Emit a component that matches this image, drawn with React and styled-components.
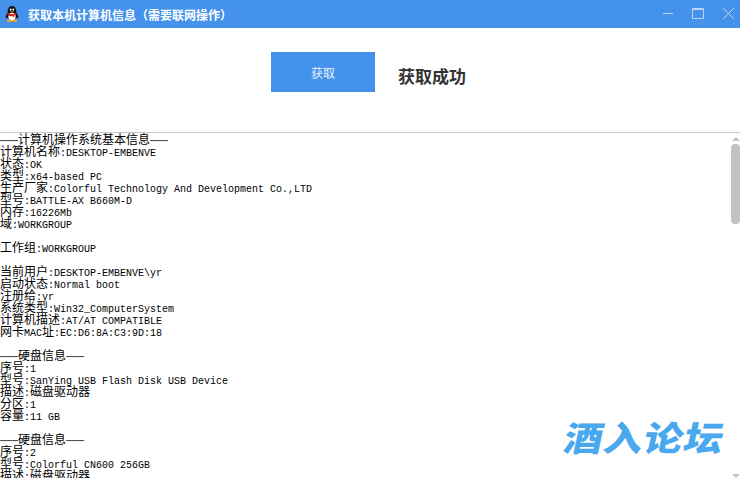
import React from 'react'
import styled, { createGlobalStyle } from 'styled-components'

const Global = createGlobalStyle`
html, body { margin: 0; padding: 0; background: #fff; }
#root { width: 740px; height: 478px; overflow: hidden; }
`
const Window = styled.div`
position: relative;
width: 740px;
height: 478px;
display: flex;
flex-direction: column;
background: #fff;
overflow: hidden;
`
const TitleBar = styled.div`
height: 28px;
flex: none;
background: #4592ec;
display: flex;
align-items: center;
padding-left: 4px;
`
const Title = styled.div`
margin-left: 8px;
color: #fff;
font: 700 12px "Noto Sans CJK SC", sans-serif;
white-space: nowrap;
`
const Controls = styled.div`
margin-left: auto;
display: flex;
align-items: center;
`
const Control = styled.svg`
display: block;
width: 30px;
height: 28px;
fill: none;
stroke: #b9d5f8;
`
const Actions = styled.div`
height: 105px;
flex: none;
display: flex;
align-items: flex-start;
padding: 24px 0 0 271px;
box-sizing: border-box;
border-bottom: 1px solid #c8c8c8;
`
const Button = styled.button`
width: 104px;
height: 40px;
border: 0;
padding: 0;
background: #4592ec;
color: #e8f2fe;
font: 12px "Noto Sans CJK SC", sans-serif;
`
const Status = styled.div`
margin: 15px 0 0 23px;
color: #333;
font: 700 17px/1 "Noto Sans CJK SC", sans-serif;
`
const Body = styled.div`
flex: 1;
min-height: 0;
display: flex;
`
const Log = styled.div`
flex: 1;
overflow: hidden;
color: #000;
font: 10px/12px "Liberation Mono", monospace;
`
const Line = styled.div`
height: 12px;
white-space: pre;
`
const Han = styled.span`
font: 12px/12px "Noto Sans CJK SC", sans-serif;
`
const Track = styled.div`
width: 9px;
flex: none;
display: flex;
flex-direction: column;
align-items: center;
`
const Arrow = styled.div`
width: 0;
height: 0;
border-left: 4px solid transparent;
border-right: 4px solid transparent;
border-bottom: ${p => (p.$down ? '0' : '4px solid #c2c2c2')};
border-top: ${p => (p.$down ? '4px solid #c2c2c2' : '0')};
margin-top: ${p => (p.$down ? 'auto' : '4px')};
margin-bottom: ${p => (p.$down ? '0' : '3px')};
`
const Thumb = styled.div`
width: 9px;
height: 80px;
background: #c2c2c2;
border-radius: 4px;
`
const Watermark = styled.div`
position: absolute;
left: 565px;
top: 413px;
color: #4aa8ee;
font: 900 39px/46px "Noto Sans CJK SC", sans-serif;
letter-spacing: 1px;
transform: skewX(-12deg) scaleY(0.88);
white-space: nowrap;
`

const lines = [
  '───计算机操作系统基本信息───',
  '计算机名称:DESKTOP-EMBENVE',
  '状态:OK',
  '类型:x64-based PC',
  '生产厂家:Colorful Technology And Development Co.,LTD',
  '型号:BATTLE-AX B660M-D',
  '内存:16226Mb',
  '域:WORKGROUP',
  '',
  '工作组:WORKGROUP',
  '',
  '当前用户:DESKTOP-EMBENVE\\yr',
  '启动状态:Normal boot',
  '注册给:yr',
  '系统类型:Win32_ComputerSystem',
  '计算机描述:AT/AT COMPATIBLE',
  '网卡MAC址:EC:D6:8A:C3:9D:18',
  '',
  '───硬盘信息───',
  '序号:1',
  '型号:SanYing USB Flash Disk USB Device',
  '描述:磁盘驱动器',
  '分区:1',
  '容量:11 GB',
  '',
  '───硬盘信息───',
  '序号:2',
  '型号:Colorful CN600 256GB',
  '描述:磁盘驱动器',
]

// latin runs are 6px wide, han runs 12px, like the old bitmap font
const renderLine = text =>
  text.split(/([\u4e00-\u9fff]+)/).map((part, i) =>
    i % 2 ? <Han key={i}>{part}</Han> : part
  )

const Penguin = () => (
  <svg width="16" height="18" viewBox="0 0 20 22">
    <path d="M10 1c-3.600 0-5.200 2.800-5.200 6 0 1-.2 1.700-.7 2.600C2.900 11.800 1.800 14 2 16c.3 1 1.300.3 2-.8.4 1.300 1.200 2.400 2.300 3.200h7.400c1.100-.8 1.900-1.900 2.300-3.200.7 1.100 1.700 1.800 2 .8.2-2-.9-4.200-2.100-6.400-.5-.9-.7-1.600-.7-2.600 0-3.200-1.600-6-5.200-6z" fill="#111" />
    <ellipse cx="10" cy="14.500" rx="4.600" ry="5" fill="#fff" />
    <ellipse cx="8.300" cy="5.500" rx="1.100" ry="1.500" fill="#fff" />
    <ellipse cx="11.700" cy="5.500" rx="1.100" ry="1.500" fill="#fff" />
    <path d="M7.500 7.800h5l-2.500 1.600z" fill="#f5b21b" />
    <path d="M4.500 9.800c3 1.500 8 1.500 11 0l.3 1.800c-1 .6-2 .9-3 1l.3 3-2.300-1.800c-2.300.2-4.800-.3-6.600-1.300z" fill="#e2231a" />
    <ellipse cx="6.500" cy="19.500" rx="3" ry="1.500" fill="#f5a81b" />
    <ellipse cx="13.500" cy="19.500" rx="3" ry="1.500" fill="#f5a81b" />
  </svg>
)

const App = () => {
  return (
    <>
      <Global />
      <Window>
        <TitleBar>
          <Penguin />
          <Title>获取本机计算机信息（需要联网操作）</Title>
          <Controls>
            <Control viewBox="0 0 30 28"><path d="M13 13.500h10" /></Control>
            <Control viewBox="0 0 30 28"><path d="M12.500 8.500h11v10h-11z M12.500 9.500h11" /></Control>
            <Control viewBox="0 0 30 28"><path d="M13 8l11 11M24 8L13 19" /></Control>
          </Controls>
        </TitleBar>
        <Actions>
          <Button>获取</Button>
          <Status>获取成功</Status>
        </Actions>
        <Body>
          <Log>
            {lines.map((text, i) => (
              <Line key={i}>{renderLine(text)}</Line>
            ))}
          </Log>
          <Track>
            <Arrow />
            <Thumb />
            <Arrow $down />
          </Track>
        </Body>
        <Watermark>酒入论坛</Watermark>
      </Window>
    </>
  )
}
export default App
